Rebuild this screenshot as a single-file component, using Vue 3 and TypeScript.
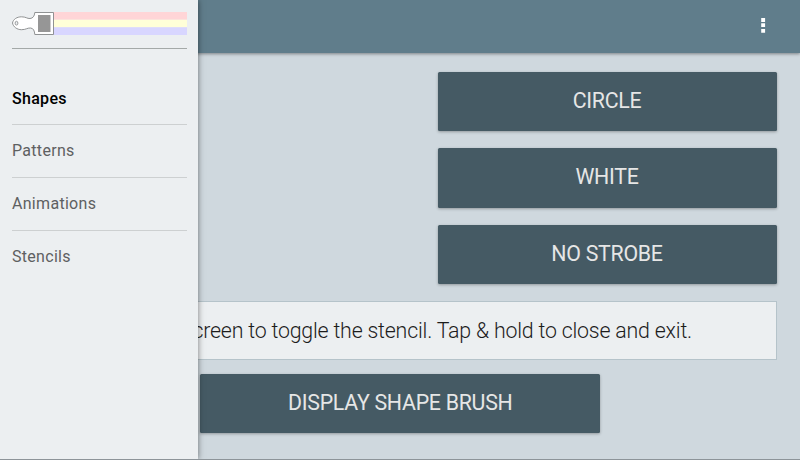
<script setup lang="ts">
import { ref } from 'vue'

const sections: string[] = ['Shapes', 'Patterns', 'Animations', 'Stencils']
const active = ref('Shapes')
const options: string[] = ['Circle', 'White', 'No strobe']
</script>

<template>
  <div class="screen">
    <header class="toolbar">
      <button class="overflow" aria-label="More options">
        <svg width="6" height="16" viewBox="0 0 6 16">
          <path d="M1.2 1.1h3.9v3.8H1.2zM1.2 6.3h3.9v3.8H1.2zM1.2 12h3.9v3.8H1.2z" fill="#fff" />
        </svg>
      </button>
    </header>

    <main class="content">
      <div class="options">
        <button v-for="option in options" :key="option" class="btn">{{ option }}</button>
      </div>
      <p class="hint">Tap the screen to toggle the stencil. Tap &amp; hold to close and exit.</p>
      <button class="btn display">Display shape brush</button>
    </main>

    <nav class="drawer">
      <div class="brand">
        <svg width="175" height="24" viewBox="0 0 175 24">
          <path d="M41 0h134v7.7H41z" fill="#ffd5d7" />
          <path d="M41 7.7h134v7.5H41z" fill="#ffffd8" />
          <path d="M41 15.2h134V23H41z" fill="#d8d6ff" />
          <path
            d="M.5 11C1.2 7.2 5 4.8 9.5 4.8c4.5 0 5.5 1.9 8.5 1.7 3-.2 4.5-2.4 4.8-6h18.7v22H22.8c-.3-3.6-1.3-6.3-4.3-6.5-3.2-.2-4.5 1.7-9 1.7C5 17.7 1.2 14.8.5 11z"
            fill="#fff" stroke="#858788" stroke-width=".9"
          />
          <ellipse cx="4.5" cy="11.2" rx="1.4" ry="1.9" fill="#edf0f2" stroke="#858788" stroke-width=".8" />
          <path d="M26 3h12.5v17H26z" fill="#969696" />
        </svg>
      </div>
      <ul class="menu">
        <li
          v-for="section in sections"
          :key="section"
          :class="{ active: section === active }"
          @click="active = section"
        >
          {{ section }}
        </li>
      </ul>
    </nav>
  </div>
</template>

<style>
body {
  margin: 0;
}
</style>

<style scoped>
.screen {
  position: relative;
  box-sizing: border-box;
  width: 800px;
  height: 460px;
  overflow: hidden;
  display: flex;
  flex-direction: column;
  background: #cfd8de;
  border-bottom: 1px solid #8d9499;
  font-family: Roboto, 'Liberation Sans', sans-serif;
}

.toolbar {
  box-sizing: border-box;
  height: 53px;
  flex: none;
  display: flex;
  align-items: center;
  justify-content: flex-end;
  padding: 0 34px 3px 0;
  background: #607d8b;
  box-shadow: 0 1px 3px rgba(0, 0, 0, 0.4);
}

.overflow {
  display: flex;
  padding: 0;
  border: 0;
  background: none;
}

.content {
  display: flex;
  flex-direction: column;
  padding: 18.5px 23.5px 0 24px;
}

.options {
  display: flex;
  flex-direction: column;
  align-items: flex-end;
  gap: 17px;
}

.btn {
  box-sizing: border-box;
  width: 339px;
  height: 59.6px;
  padding: 0 0 2px;
  border: 0;
  border-radius: 1.5px;
  background: #455a64;
  color: #e6e6e6;
  font: 400 21.33px Roboto, 'Liberation Sans', sans-serif;
  letter-spacing: -0.27px;
  text-transform: uppercase;
  box-shadow: 0 1px 3px rgba(0, 0, 0, 0.3);
}

.hint {
  box-sizing: border-box;
  height: 59.5px;
  margin: 16.5px 0 13.5px;
  border: 1px solid #b5c3ca;
  background: #eceff1;
  color: #1c1c1c;
  font-size: 21.33px;
  font-weight: 300;
  letter-spacing: -0.19px;
  line-height: 57px;
  text-align: center;
  white-space: nowrap;
}

.display {
  width: 400px;
  align-self: center;
}

.drawer {
  position: absolute;
  inset: 0 auto 0 0;
  box-sizing: border-box;
  width: 198px;
  padding: 12px 11px 0 12px;
  background: #eceff1;
  box-shadow: 0 0 6px rgba(0, 0, 0, 0.5);
}

.brand {
  height: 36px;
  border-bottom: 1px solid #a4a9a8;
}

.brand svg {
  display: block;
}

.menu {
  margin: 0;
  padding: 23.5px 0 0;
  list-style: none;
}

.menu li {
  box-sizing: border-box;
  height: 52.7px;
  border-bottom: 1px solid #cdd0d1;
  color: #5e6061;
  font-size: 16px;
  line-height: 52.9px;
  letter-spacing: 0.3px;
}

.menu li:last-child {
  border-bottom: 0;
}

.menu li.active {
  color: #000;
  font-weight: 500;
}
</style>
